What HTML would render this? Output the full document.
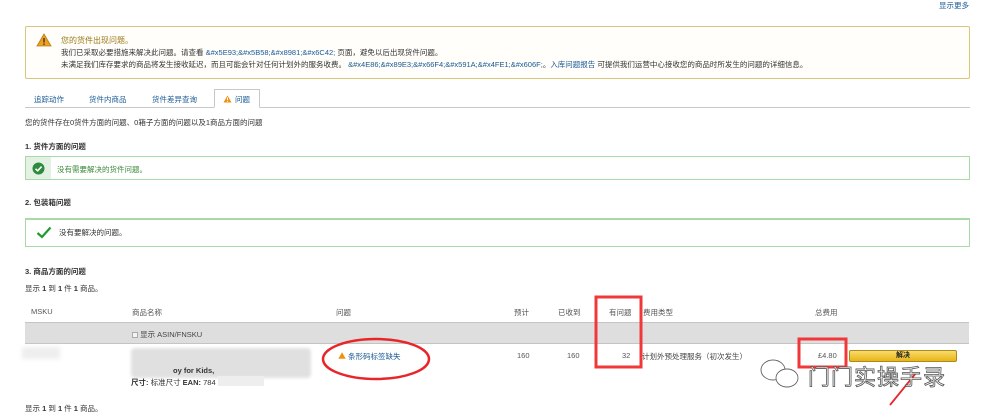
<!DOCTYPE html>
<html><head><meta charset="utf-8"><style>
*{margin:0;padding:0;box-sizing:border-box}
body{width:986px;height:418px;background:#fff;position:relative;overflow:hidden;font-family:"Liberation Sans","Noto Sans CJK SC",sans-serif;font-size:7.5px;color:#333}
.a{position:absolute;white-space:nowrap}
.lnk{color:#1a5a96}
b{font-weight:bold}
</style></head><body>
<div class="a lnk" style="left:939px;top:0px">显示更多</div>
<div class="a" style="left:25px;top:26px;width:945px;height:53px;border:1px solid #d8c67a;border-radius:2px;background:#fffefa"></div>
<svg class="a" style="left:36px;top:33px" width="16" height="14"><path d="M8 1L15 13H1Z" fill="#f0a020" stroke="#b57c10" stroke-width="0.8"/><rect x="7.3" y="5" width="1.4" height="4.5" fill="#333"/><rect x="7.3" y="10.5" width="1.4" height="1.4" fill="#333"/></svg>
<div class="a" style="left:61px;top:35px;font-size:8px;color:#9b7a1a">您的货件出现问题。</div>
<div class="a" style="left:61px;top:47px">我们已采取必要措施来解决此问题。请查看 <span class="lnk">&amp;#x5E93;&amp;#x5B58;&amp;#x8981;&amp;#x6C42;</span> 页面，避免以后出现货件问题。</div>
<div class="a" style="left:61px;top:59px">未满足我们库存要求的商品将发生接收延迟，而且可能会针对任何计划外的服务收费。 <span class="lnk">&amp;#x4E86;&amp;#x89E3;&amp;#x66F4;&amp;#x591A;&amp;#x4FE1;&amp;#x606F;</span>。<span class="lnk">入库问题报告</span> 可提供我们运营中心接收您的商品时所发生的问题的详细信息。</div>
<div class="a" style="left:25px;top:107px;width:945px;height:1px;background:#c8c8c8"></div>
<div class="a lnk" style="left:34px;top:94px">追踪动作</div>
<div class="a lnk" style="left:89px;top:94px">货件内商品</div>
<div class="a lnk" style="left:152px;top:94px">货件差异查询</div>
<div class="a" style="left:214px;top:89px;width:46px;height:19px;border:1px solid #c8c8c8;border-bottom:1px solid #fff;background:#fff"></div>
<svg class="a" style="left:223px;top:95px" width="9" height="8"><path d="M4.5 0.5L8.5 7.5H0.5Z" fill="#f09010"/><rect x="4" y="2.5" width="1" height="2.5" fill="#fff"/><rect x="4" y="5.7" width="1" height="1" fill="#fff"/></svg>
<div class="a lnk" style="left:235px;top:94px">问题</div>
<div class="a" style="left:25px;top:117px">您的货件存在0货件方面的问题、0箱子方面的问题以及1商品方面的问题</div>
<div class="a" style="left:25px;top:141px"><b>1. 货件方面的问题</b></div>
<div class="a" style="left:25px;top:156px;width:945px;height:24px;border:1px solid #a9d8a9;background:#fff"></div>
<div class="a" style="left:26px;top:157px;width:25px;height:22px;background:#e2f1e2"></div>
<svg class="a" style="left:32px;top:162px" width="13" height="13"><circle cx="6.5" cy="6.5" r="6" fill="#2e8b3e"/><path d="M3.5 6.8L5.7 8.8L9.6 4.6" stroke="#fff" stroke-width="1.6" fill="none"/></svg>
<div class="a" style="left:57px;top:164px;color:#3a8a3a">没有需要解决的货件问题。</div>
<div class="a" style="left:25px;top:197px"><b>2. 包装箱问题</b></div>
<div class="a" style="left:25px;top:218px;width:945px;height:29px;border:1px solid #a9d8a9;border-top-width:2px;background:#fff"></div>
<svg class="a" style="left:36px;top:226px" width="16" height="13"><path d="M1.5 7L6 11L14.5 1.5" stroke="#1f9a2e" stroke-width="2.2" fill="none"/></svg>
<div class="a" style="left:59px;top:227px">没有要解决的问题。</div>
<div class="a" style="left:25px;top:266px"><b>3. 商品方面的问题</b></div>
<div class="a" style="left:25px;top:283px">显示 <b>1</b> 到 <b>1</b> 件 <b>1</b> 商品。</div>
<div class="a" style="left:31px;top:307px;color:#555">MSKU</div>
<div class="a" style="left:132px;top:307px;color:#555">商品名称</div>
<div class="a" style="left:336px;top:307px;color:#555">问题</div>
<div class="a" style="left:514px;top:307px;color:#555">预计</div>
<div class="a" style="left:558px;top:307px;color:#555">已收到</div>
<div class="a" style="left:609px;top:307px;color:#555">有问题</div>
<div class="a" style="left:643px;top:307px;color:#555">费用类型</div>
<div class="a" style="left:815px;top:307px;color:#555">总费用</div>
<div class="a" style="left:25px;top:322px;width:944px;height:22px;background:#dedede;border-top:1px solid #c4c4c4;border-bottom:1px solid #c4c4c4"></div>
<div class="a" style="left:132px;top:329px;color:#444"><span style="display:inline-block;width:6px;height:6px;border:1px solid #aaa;background:#f4f4f4;vertical-align:-1px"></span> 显示 ASIN/FNSKU</div>
<div class="a" style="left:22px;top:347px;width:38px;height:12px;background:#eeeeee;filter:blur(2px)"></div>
<div class="a" style="left:131px;top:348px;width:180px;height:30px;background:#e0e0e0;filter:blur(1.5px);border-radius:4px"></div>
<div class="a" style="left:173px;top:366px;font-weight:bold;color:#333">oy for Kids,</div>
<div class="a" style="left:131px;top:377px"><b>尺寸:</b> 标准尺寸 <b>EAN:</b> 784</div>
<div class="a" style="left:218px;top:376px;width:46px;height:10px;background:#eee"></div>
<svg class="a" style="left:338px;top:352px" width="8" height="7"><path d="M4 0.3L7.7 6.7H0.3Z" fill="#f09010"/></svg>
<div class="a lnk" style="left:348px;top:351px">条形码标签缺失</div>
<div class="a" style="left:517px;top:351px;color:#555">160</div>
<div class="a" style="left:567px;top:351px;color:#555">160</div>
<div class="a" style="left:622px;top:351px;color:#555">32</div>
<div class="a" style="left:642px;top:351px;color:#444">计划外预处理服务（初次发生）</div>
<div class="a" style="left:818px;top:351px;color:#555">£4.80</div>
<div class="a" style="left:849px;top:350px;width:108px;height:12px;border:1px solid #a88a20;border-radius:2px;background:linear-gradient(#f9dc6a,#e8b418);text-align:center;font-size:7px;line-height:10px;font-weight:bold;color:#222">解决</div>
<svg class="a" style="left:0;top:0" width="986" height="418">
<ellipse cx="376" cy="359" rx="53" ry="20" fill="none" stroke="#e8262a" stroke-width="2.5"/>
<rect x="596" y="297" width="45" height="70" fill="none" stroke="#f0383a" stroke-width="3"/>
<rect x="799" y="339" width="47" height="28" fill="none" stroke="#f0383a" stroke-width="3"/>
<path d="M890 405L916 373" stroke="#e8262a" stroke-width="1.8"/>
<g fill="#fff" stroke="#666" stroke-width="0.9"><ellipse cx="773" cy="370" rx="12" ry="10"/><ellipse cx="787" cy="378" rx="11" ry="9"/></g>
</svg>
<div class="a" style="left:808px;top:360px;font-size:22px;color:#fff;-webkit-text-stroke:0.8px #555;letter-spacing:1px">门门实操手录</div>
<div class="a" style="left:25px;top:403px">显示 <b>1</b> 到 <b>1</b> 件 <b>1</b> 商品。</div>
</body></html>
